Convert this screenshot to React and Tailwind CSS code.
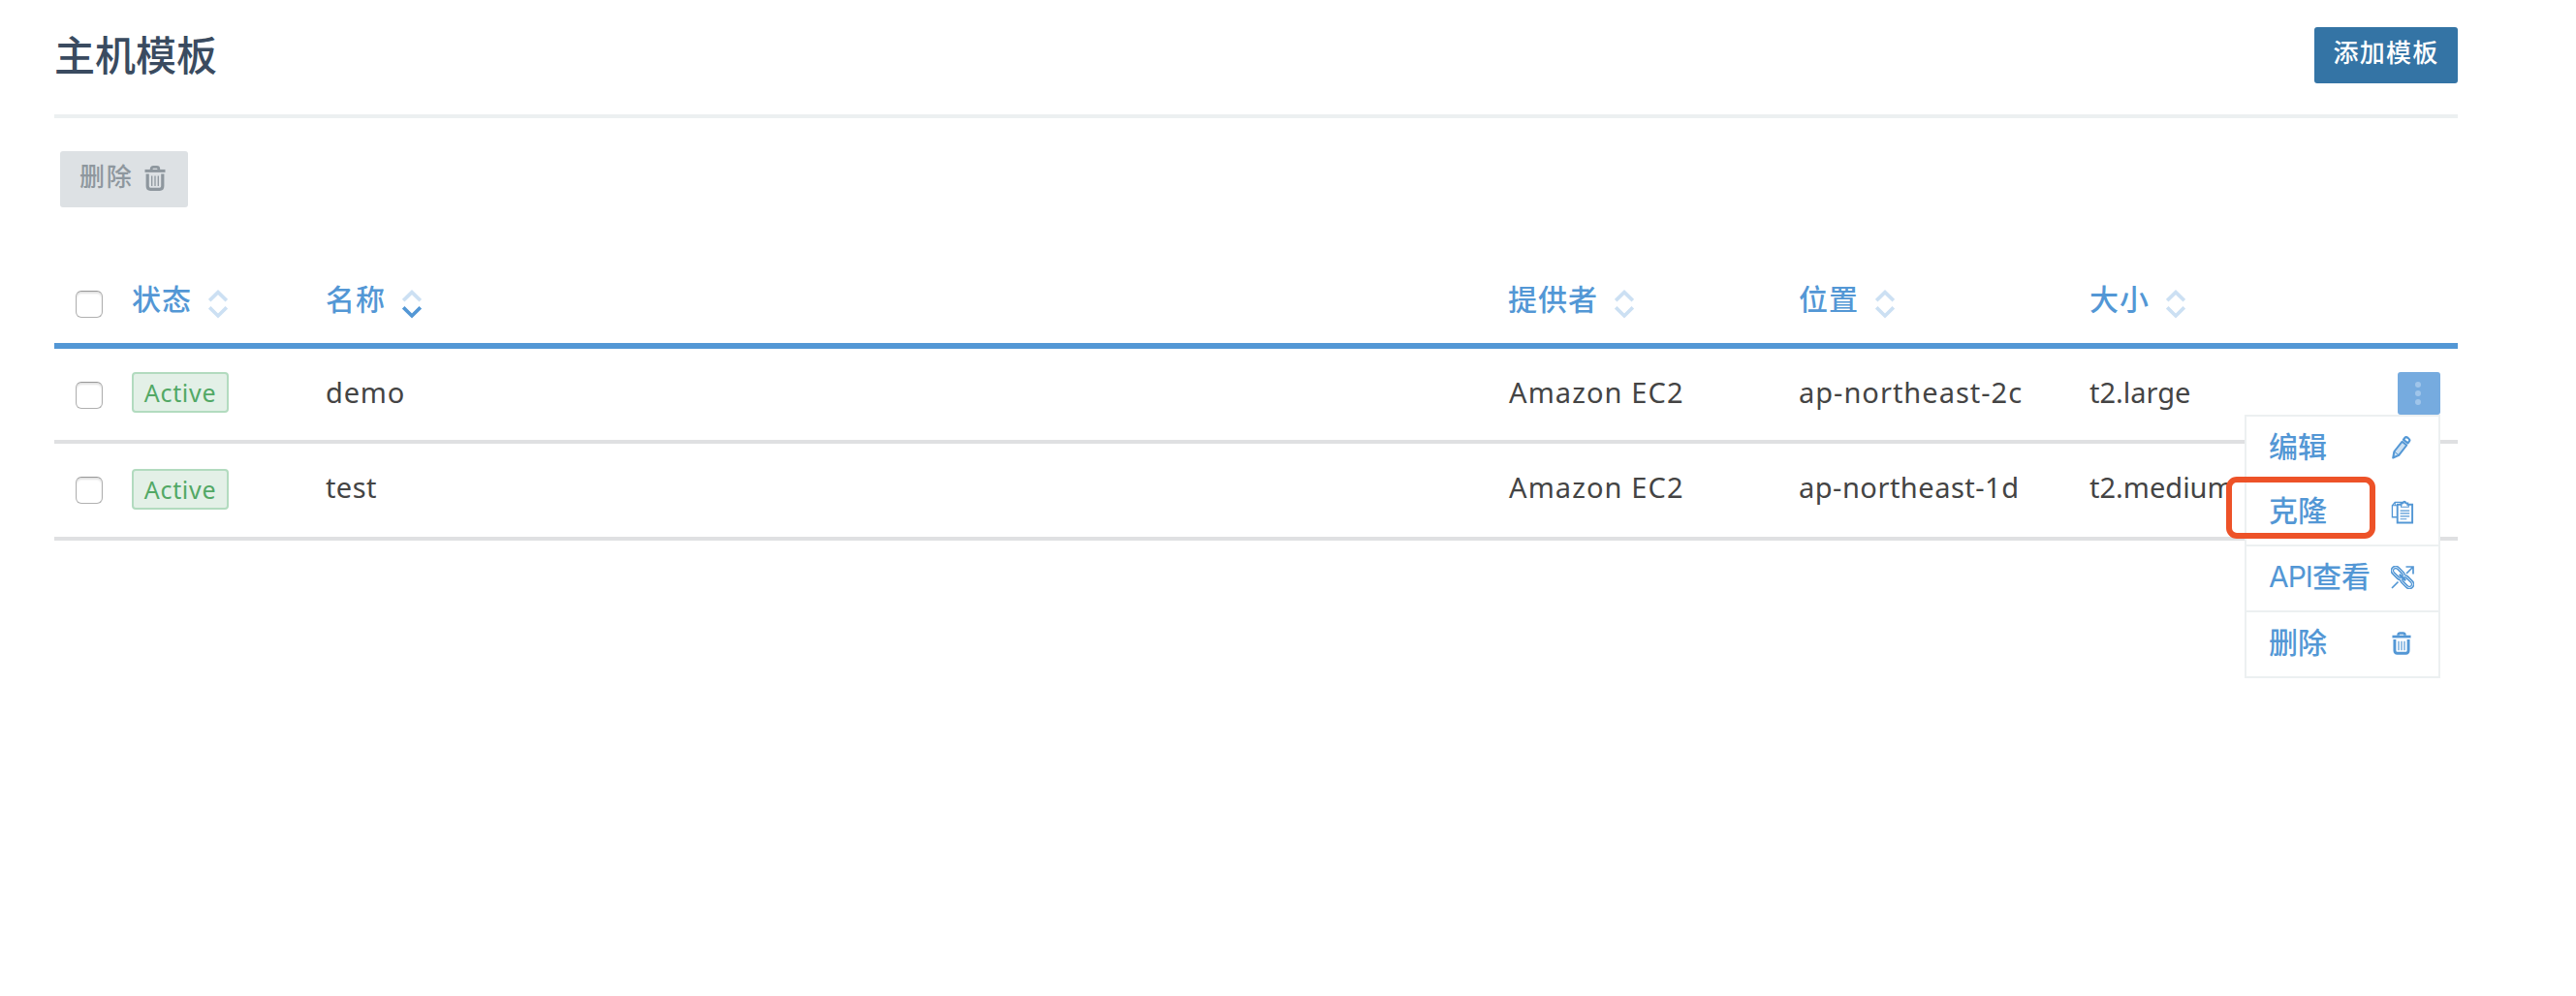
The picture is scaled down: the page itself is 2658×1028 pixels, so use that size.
const cjk = "font-['Noto_Sans','Noto_Sans_CJK_SC',sans-serif]";

function TrashIcon({ className }) {
  return (
    <svg viewBox="0 0 22 26" className={className} fill="none" stroke="currentColor">
      <path d="M7.200 4V3.400Q7.200 1.400 9.200 1.400h3.600Q14.800 1.400 14.800 3.400V4" strokeWidth="2.800" />
      <path d="M0.500 5.400h21" strokeWidth="3" />
      <path d="M3.200 8.500v12.500Q3.200 24.300 6.200 24.300h9.600Q18.800 24.300 18.800 21V8.500" strokeWidth="3.200" />
      <path d="M7.700 10.500v10.500M11 10.500v10.500M14.300 10.500v10.500" strokeWidth="1.300" />
    </svg>
  );
}

function PencilIcon({ className }) {
  return (
    <svg viewBox="0 0 20 24" className={className} fill="none" stroke="currentColor" strokeLinejoin="round">
      <path d="M1.200 22.500l1.200-6.500L10.500 5.800l4.800 3.700L7.200 19.800z" fill="currentColor" fillOpacity="0.300" strokeWidth="2" />
      <path d="M2.400 16l4.800 3.800" strokeWidth="1" />
      <path d="M12 3.800l1.600-2q1-1.200 3 .2 2.600 2 1.400 3.400l-1.500 2z" strokeWidth="2.200" />
    </svg>
  );
}

function CopyIcon({ className }) {
  return (
    <svg viewBox="0 0 24 26" className={className} fill="none" stroke="currentColor" strokeWidth="1.400">
      <path d="M6 18.500H1V6l3-3.500h12" />
      <path d="M1 6h5M4 2.500V6" strokeWidth="1.100" />
      <path d="M6.500 5h4V3.500h2Q14 0 15.500 3.500h2V5h5v19.500h-16z" fill="white" strokeWidth="2" />
      <path d="M10.500 5v2.500h8V5M9.500 11.500h10M9.500 14.500h10M9.500 17.500h10M9.500 20.500h7" strokeWidth="1.200" />
    </svg>
  );
}

function LinkIcon({ className }) {
  return (
    <svg viewBox="0 0 24 24" className={className} fill="none" stroke="currentColor">
      <path d="M1 23l6.500-6.500M16 8l6.500-6.500M15.500 1H23v7.500" strokeWidth="1.700" />
      <g transform="rotate(45 12 12)">
        <rect x="-1.500" y="8.500" width="14" height="7" rx="3.500" strokeWidth="3.600" />
        <rect x="11.500" y="8.500" width="14" height="7" rx="3.500" strokeWidth="3.600" />
        <rect x="-1.500" y="8.500" width="14" height="7" rx="3.500" stroke="white" strokeWidth="0.700" />
        <rect x="11.500" y="8.500" width="14" height="7" rx="3.500" stroke="white" strokeWidth="0.700" />
        <path d="M7.500 12h9" strokeWidth="2.400" />
      </g>
    </svg>
  );
}

function SortIcon({ active }) {
  return (
    <svg viewBox="0 0 20 30" className="mt-[9px] h-[30px] w-[20px]" fill="none" strokeWidth="3.600">
      <path d="M1.200 11.200L10 2.600l8.800 8.600" stroke="#cce0f3" />
      <path d="M1.200 18.300L10 27l8.800-8.700" stroke={active ? "#5397d5" : "#cce0f3"} />
    </svg>
  );
}

function Checkbox() {
  return (
    <span className="block h-[28px] w-[28px] rounded-[6px] border border-[#b0b0b0] border-t-[#989898] bg-white shadow-[inset_0_2px_2px_rgba(0,0,0,0.12)]" />
  );
}

const grid = "grid grid-cols-[80px_200px_1220px_300px_300px_380px]";

function HeadCell({ label, active }) {
  return (
    <div className="flex h-[38px] items-center gap-[17px]">
      <span className="text-[30px] leading-[36px] font-medium tracking-[1px] whitespace-nowrap">{label}</span>
      <SortIcon active={active} />
    </div>
  );
}

const rows = [
  {
    name: "demo",
    zone: "ap-northeast-2c",
    size: "t2.large",
    nameCls: "tracking-[0.800px]",
    zoneCls: "tracking-[1px]",
    cls: "h-[98px] pt-[24px]",
    boxCls: "pt-[10px]",
    textCls: "pt-px",
  },
  {
    name: "test",
    zone: "ap-northeast-1d",
    size: "t2.medium",
    nameCls: "tracking-[0.400px]",
    zoneCls: "tracking-[0.500px]",
    cls: "h-[100px] pt-[26px]",
    boxCls: "pt-[8px]",
    textCls: "-mt-px",
  },
];

const items = [
  { label: "编辑", Icon: PencilIcon, icon: "h-[24px] w-[20px] mr-[3px]", cls: "h-[66px] pb-[5px]" },
  { label: "克隆", Icon: CopyIcon, icon: "h-[25px] w-[24px]", cls: "h-[68px] border-b-2 pb-[5px]" },
  { label: "查看", latin: "API", Icon: LinkIcon, icon: "h-[24px] w-[24px]", cls: "h-[68px] border-b-2 pb-[5px]" },
  { label: "删除", Icon: TrashIcon, icon: "h-[24px] w-[20px] mr-[3px]", cls: "h-[66px] pb-[5px]" },
];

function ActionMenu() {
  return (
    <div className="absolute top-full right-0 z-10 w-[202px] border-2 border-[#ecf0f1] bg-white text-[#5397d5]">
      {items.map(({ label, latin, Icon, icon, cls }) => (
        <div key={label} className={`flex items-center justify-between border-[#ecf0f1] pr-[25px] pl-[23px] ${cls}`}>
          <span className="text-[30px] leading-[36px] font-medium whitespace-nowrap">
            {latin && <span className="font-['Inter',sans-serif] font-normal tracking-[-1px]">{latin}</span>}
            {label}
          </span>
          <Icon className={`mt-[3px] shrink-0 ${icon}`} />
        </div>
      ))}
      <div className="absolute top-[62px] -left-[21px] h-[64px] w-[154px] rounded-[11px] border-[6px] border-[#ed5228]" />
    </div>
  );
}

export default function App() {
  return (
    <main className={`min-h-[1028px] w-[2658px] bg-white pr-[122px] pl-[56px] ${cjk}`}>
      <header className="flex h-[122px] items-start justify-between border-b-4 border-[#ecf0f1]">
        <h1 className="mt-[29px] text-[42px] leading-[56px] font-medium text-[#3a4b60]">主机模板</h1>
        <button className="mt-[28px] flex h-[58px] w-[148px] justify-center rounded-[3px] bg-[#3474a5] pt-[8px] text-[26px] leading-[36px] font-medium tracking-[1.200px] text-white">
          添加模板
        </button>
      </header>
      <button className="mt-[34px] ml-[6px] flex h-[58px] w-[132px] gap-[11px] rounded-[3px] bg-[#dde1e4] pt-[8px] pl-[20px] text-[26px] leading-[36px] font-medium tracking-[1.800px] text-[#8e979e]">
        删除
        <TrashIcon className="mt-[7px] h-[26px] w-[22px]" />
      </button>
      <section className="pt-[76px]">
        <div className={`${grid} h-[70px] border-b-[6px] border-[#5397d5] text-[#5397d5]`}>
          <div className="pt-[10px] pl-[22px]"><Checkbox /></div>
          <HeadCell label="状态" />
          <HeadCell label="名称" active />
          <HeadCell label="提供者" />
          <HeadCell label="位置" />
          <HeadCell label="大小" />
        </div>
        {rows.map((r, i) => (
          <div key={r.name} className={`${grid} items-start border-b-4 border-[#dfe0e2] text-[29px] leading-[40px] text-[#444] ${r.cls}`}>
            <div className={`pl-[22px] ${r.boxCls}`}><Checkbox /></div>
            <span className="flex h-[42px] w-[100px] items-center justify-center rounded-[4px] border-2 border-[#b2dbbf] bg-[#e3f0e7] text-[25px] leading-[36px] tracking-[0.700px] text-[#52a865]">
              Active
            </span>
            <div className={`${r.nameCls} ${r.textCls}`}>{r.name}</div>
            <div className={`pl-px tracking-[1.100px] ${r.textCls}`}>Amazon EC2</div>
            <div className={`${r.zoneCls} ${r.textCls}`}>{r.zone}</div>
            <div className="flex items-start justify-between pr-[18px]">
              <span className={r.textCls}>{r.size}</span>
              {i === 0 && (
                <div className="relative">
                  <button className="flex h-[44px] w-[44px] flex-col items-center justify-center gap-[3px] rounded-[3px] bg-[#76abdf] pr-[2px]">
                    <i className="h-[6px] w-[6px] rounded-full bg-[#a0c5ea]" />
                    <i className="h-[6px] w-[6px] rounded-full bg-[#a0c5ea]" />
                    <i className="h-[6px] w-[6px] rounded-full bg-[#a0c5ea]" />
                  </button>
                  <ActionMenu />
                </div>
              )}
            </div>
          </div>
        ))}
      </section>
    </main>
  );
}
